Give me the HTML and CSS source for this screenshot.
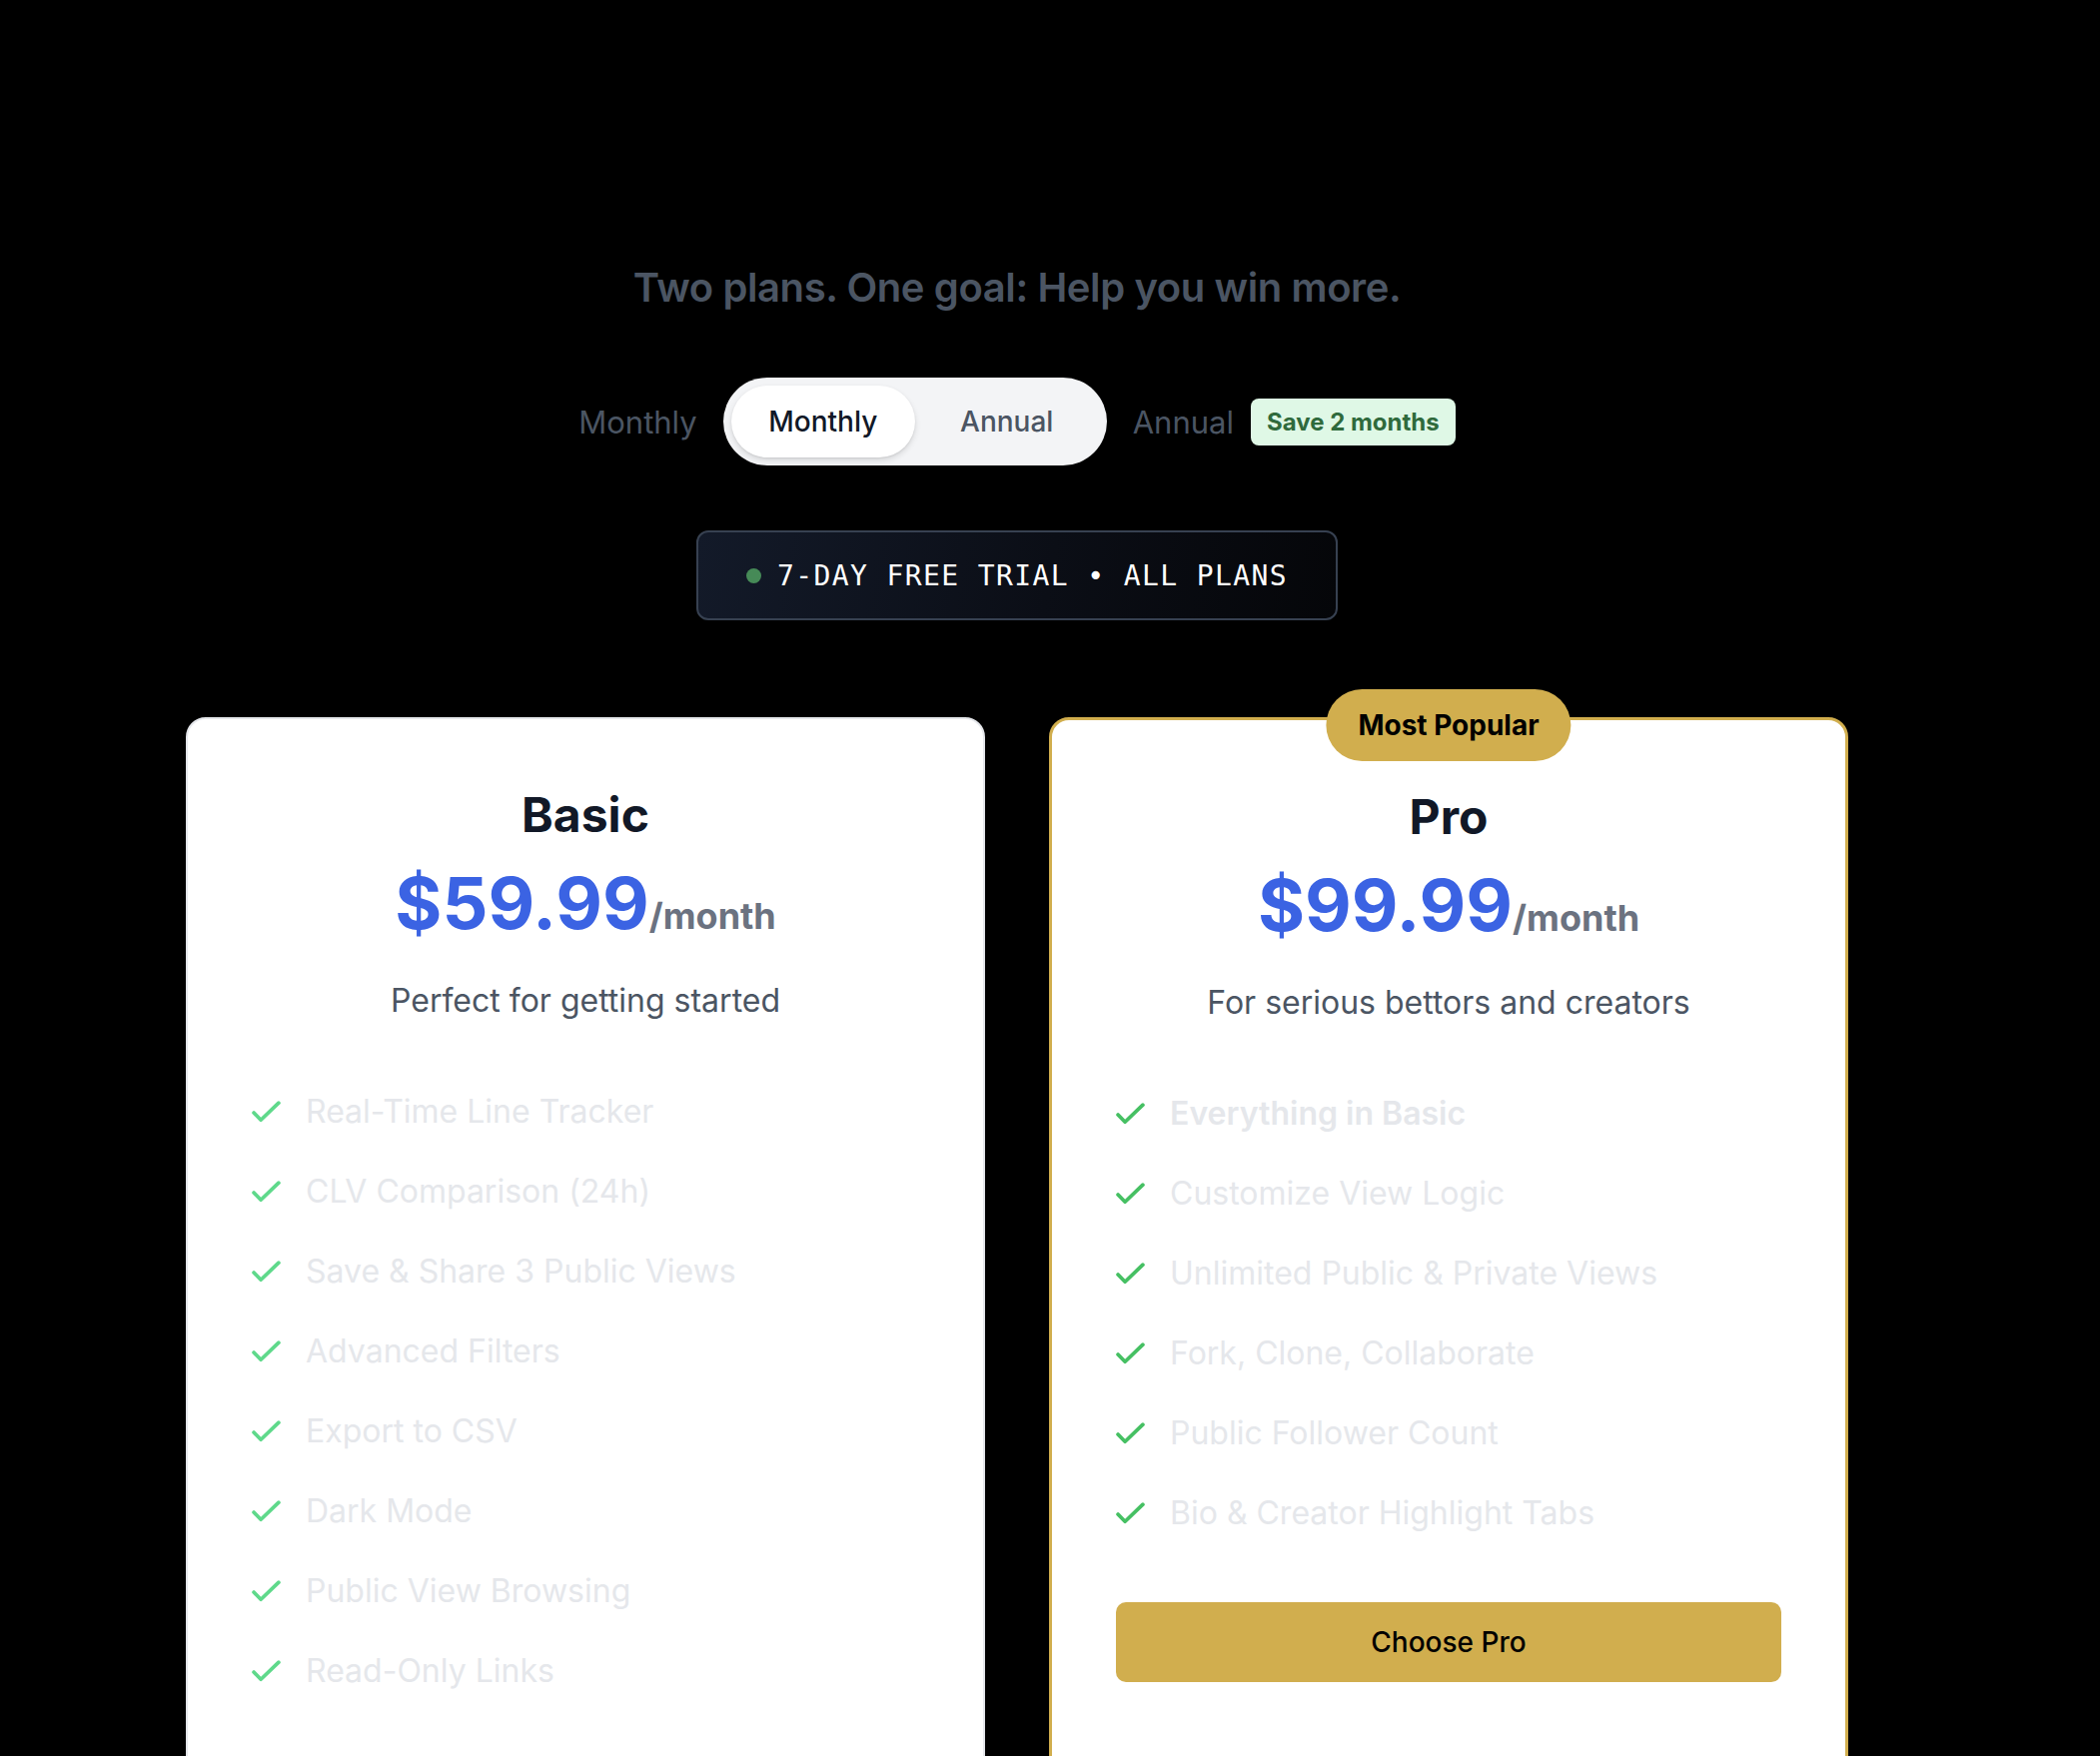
FILE: index.html
```html
<!DOCTYPE html>
<html lang="en">
<head>
<meta charset="utf-8">
<title>Pricing</title>
<link rel="stylesheet" href="styles.css">
</head>
<body>
<main class="page">
  <section class="hero">
    <h1 class="headline">Two plans. One goal: Help you win more.</h1>

    <div class="billing-row">
      <span class="billing-label">Monthly</span>
      <div class="toggle">
        <button class="toggle-btn is-active" type="button">Monthly</button>
        <button class="toggle-btn" type="button">Annual</button>
      </div>
      <div class="annual-group">
        <span class="billing-label">Annual</span>
        <span class="save-badge">Save 2 months</span>
      </div>
    </div>

    <div class="trial-wrap">
      <div class="trial">
        <span class="trial-dot"></span>
        <span class="trial-text">7-DAY FREE TRIAL • ALL PLANS</span>
      </div>
    </div>
  </section>

  <section class="plans">
    <article class="card card-basic">
      <h2 class="plan-name">Basic</h2>
      <div class="price-line"><span class="price">$59.99</span><span class="per">/month</span></div>
      <p class="plan-desc">Perfect for getting started</p>
      <ul class="features features-basic">
        <li><svg class="check" viewBox="0 0 28 28"><path d="M2 14.5 L8.8 21.5 L26 5"/></svg><span>Real-Time Line Tracker</span></li>
        <li><svg class="check" viewBox="0 0 28 28"><path d="M2 14.5 L8.8 21.5 L26 5"/></svg><span>CLV Comparison (24h)</span></li>
        <li><svg class="check" viewBox="0 0 28 28"><path d="M2 14.5 L8.8 21.5 L26 5"/></svg><span>Save &amp; Share 3 Public Views</span></li>
        <li><svg class="check" viewBox="0 0 28 28"><path d="M2 14.5 L8.8 21.5 L26 5"/></svg><span>Advanced Filters</span></li>
        <li><svg class="check" viewBox="0 0 28 28"><path d="M2 14.5 L8.8 21.5 L26 5"/></svg><span>Export to CSV</span></li>
        <li><svg class="check" viewBox="0 0 28 28"><path d="M2 14.5 L8.8 21.5 L26 5"/></svg><span>Dark Mode</span></li>
        <li><svg class="check" viewBox="0 0 28 28"><path d="M2 14.5 L8.8 21.5 L26 5"/></svg><span>Public View Browsing</span></li>
        <li><svg class="check" viewBox="0 0 28 28"><path d="M2 14.5 L8.8 21.5 L26 5"/></svg><span>Read-Only Links</span></li>
      </ul>
    </article>

    <article class="card card-pro">
      <span class="popular">Most Popular</span>
      <h2 class="plan-name">Pro</h2>
      <div class="price-line"><span class="price">$99.99</span><span class="per">/month</span></div>
      <p class="plan-desc">For serious bettors and creators</p>
      <ul class="features features-pro">
        <li class="strong"><svg class="check" viewBox="0 0 28 28"><path d="M2 14.5 L8.8 21.5 L26 5"/></svg><span>Everything in Basic</span></li>
        <li><svg class="check" viewBox="0 0 28 28"><path d="M2 14.5 L8.8 21.5 L26 5"/></svg><span>Customize View Logic</span></li>
        <li><svg class="check" viewBox="0 0 28 28"><path d="M2 14.5 L8.8 21.5 L26 5"/></svg><span>Unlimited Public &amp; Private Views</span></li>
        <li><svg class="check" viewBox="0 0 28 28"><path d="M2 14.5 L8.8 21.5 L26 5"/></svg><span>Fork, Clone, Collaborate</span></li>
        <li><svg class="check" viewBox="0 0 28 28"><path d="M2 14.5 L8.8 21.5 L26 5"/></svg><span>Public Follower Count</span></li>
        <li><svg class="check" viewBox="0 0 28 28"><path d="M2 14.5 L8.8 21.5 L26 5"/></svg><span>Bio &amp; Creator Highlight Tabs</span></li>
      </ul>
      <button class="choose" type="button">Choose Pro</button>
    </article>
  </section>
</main>
</body>
</html>
```

FILE: styles.css
```css
* { box-sizing: border-box; }

html, body {
  margin: 0;
  padding: 0;
  background: #000;
}

body {
  font-family: Inter, "Noto Sans", "Liberation Sans", sans-serif;
  color: #111827;
}

.page {
  padding: 264px 66px 80px 0;
}

.hero {
  display: flex;
  flex-direction: column;
  align-items: center;
}

.headline {
  margin: 0;
  font-size: 40px;
  line-height: 48px;
  font-weight: 600;
  color: #4b5563;
  letter-spacing: -0.01em;
}

.billing-row {
  margin-top: 66px;
  display: flex;
  align-items: center;
  gap: 26px;
}

.billing-label {
  font-size: 31px;
  font-weight: 400;
  color: #4b5563;
}

.annual-group {
  display: flex;
  align-items: center;
  gap: 17px;
}

.toggle {
  display: flex;
  padding: 8px;
  background: #f3f4f6;
  border-radius: 44px;
}

.toggle-btn {
  width: 184px;
  height: 72px;
  border: 0;
  border-radius: 36px;
  background: transparent;
  font-family: inherit;
  font-size: 28px;
  font-weight: 500;
  color: #4b5563;
  padding: 0;
}

.toggle-btn.is-active {
  background: #fff;
  color: #111827;
  box-shadow: 0 3px 6px rgba(0, 0, 0, 0.12), 0 1px 2px rgba(0, 0, 0, 0.08);
}

.save-badge {
  display: inline-flex;
  align-items: center;
  height: 47px;
  padding: 0 16px;
  border-radius: 8px;
  background: #dff8e6;
  color: #2f6a3c;
  font-size: 24px;
  font-weight: 700;
}

.trial-wrap {
  margin-top: 65px;
}

.trial {
  display: inline-flex;
  align-items: center;
  gap: 16px;
  height: 90px;
  padding: 0 48px;
  border: 2px solid #374151;
  border-radius: 12px;
  background: linear-gradient(100deg, #131a29 0%, #0b0e16 55%, #050609 100%);
}

.trial-dot {
  width: 15px;
  height: 15px;
  border-radius: 50%;
  background: #468a57;
}

.trial-text {
  font-family: "DejaVu Sans Mono", "Liberation Mono", monospace;
  font-size: 28px;
  letter-spacing: 0.05em;
  color: #fff;
}

.plans {
  margin-top: 97px;
  display: grid;
  grid-template-columns: 800px 800px;
  gap: 64px;
  justify-content: center;
}

.card {
  position: relative;
  background: #fff;
  border: 2px solid #e5e7eb;
  border-radius: 20px;
  padding: 68px 64px 120px;
  display: flex;
  flex-direction: column;
}

.card-pro {
  border: 3px solid #d1ae4e;
  padding-top: 69px;
}

.popular {
  position: absolute;
  top: -31px;
  left: 50%;
  transform: translateX(-50%);
  height: 72px;
  padding: 0 32px;
  border-radius: 36px;
  background: #d1ae4e;
  color: #000;
  font-size: 28px;
  font-weight: 700;
  display: flex;
  align-items: center;
  white-space: nowrap;
}

.plan-name {
  margin: 0;
  text-align: center;
  font-size: 48px;
  line-height: 55px;
  font-weight: 700;
  color: #111827;
}

.price-line {
  margin-top: 25px;
  text-align: center;
  line-height: 72px;
}

.price {
  font-size: 72px;
  font-weight: 700;
  color: #3b63e3;
}

.per {
  font-size: 36px;
  font-weight: 700;
  color: #6b7280;
}

.plan-desc {
  margin: 18px 0 0;
  text-align: center;
  font-size: 32px;
  line-height: 48px;
  color: #4b5563;
}

.features {
  list-style: none;
  margin: 63px 0 0;
  padding: 0;
  display: flex;
  flex-direction: column;
  gap: 32px;
}

.features li {
  display: flex;
  align-items: center;
  gap: 25px;
  font-size: 32px;
  line-height: 48px;
  color: #e5e7eb;
}

.features li.strong {
  font-weight: 600;
}

.check {
  width: 29px;
  height: 29px;
  flex: none;
  fill: none;
  stroke-width: 3.6;
  stroke-linecap: round;
  stroke-linejoin: round;
}

.features-basic .check { stroke: #5fd98b; }
.features-pro .check { stroke: #46c063; }

.choose {
  margin-top: 65px;
  height: 80px;
  width: 100%;
  border: 0;
  border-radius: 10px;
  font-family: inherit;
  font-size: 28px;
  font-weight: 500;
  color: #000;
  background: #d1ae4e;
}
```
